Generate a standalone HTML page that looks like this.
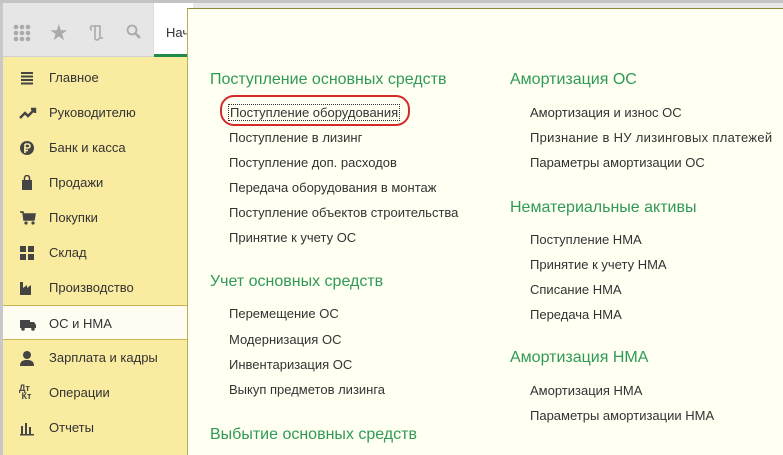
<!DOCTYPE html>
<html><head><meta charset="utf-8"><style>
*{margin:0;padding:0;box-sizing:border-box}
body{width:783px;height:455px;overflow:hidden;background:#e8e8e8;font-family:"Liberation Sans",sans-serif;position:relative}
.topline{position:absolute;left:0;top:0;width:783px;height:3px;background:#c4c4c4}
.lb{position:absolute;left:0;top:3px;width:3px;height:452px;background:#c8c8c8}
.tool{position:absolute;left:3px;top:3px;width:150px;height:54px;background:#e6e6e6;border-bottom:1px solid #cfcfcf}
.tab{position:absolute;left:153px;top:3px;width:40px;height:54px;background:#fff;border-left:1px solid #ddd}
.tab span{position:absolute;left:12px;top:22px;font-size:13px;color:#333}
.tab i{position:absolute;left:0;bottom:0;width:40px;height:3px;background:#1f8a4c}
.side{position:absolute;left:3px;top:57px;width:184px;height:398px;background:#f9eba0}
.it{position:absolute;left:0;width:184px;height:35px;font-size:13px;color:#333}
.it span{position:absolute;left:46px;top:10px}
.it svg{position:absolute;left:16px;top:10px}
.sel{background:#fffdf2;border-top:1px solid #c9b554;border-bottom:1px solid #c9b554}
.panel{position:absolute;left:187px;top:8px;width:596px;height:447px;background:#fffff2;border-top:1px solid #8f8a3a;border-left:1px solid #b9ad55}
.h{position:absolute;font-size:16px;color:#2f9a57}
.a{position:absolute;font-size:13px;color:#333}
</style></head><body>
<div class="topline"></div><div class="lb"></div>
<div class="tool">
<svg style="position:absolute;left:10px;top:21px" width="18" height="18"><g fill="#aaa"><circle cx="3" cy="3" r="2.3"/><circle cx="9" cy="3" r="2.3"/><circle cx="15" cy="3" r="2.3"/><circle cx="3" cy="9" r="2.3"/><circle cx="9" cy="9" r="2.3"/><circle cx="15" cy="9" r="2.3"/><circle cx="3" cy="15" r="2.3"/><circle cx="9" cy="15" r="2.3"/><circle cx="15" cy="15" r="2.3"/></g></svg>
<span style="position:absolute;left:46px;top:17px;font-size:22px;color:#aaa">★</span>
<svg style="position:absolute;left:86px;top:21px" width="16" height="18"><path d="M3 2h8v12h3M3 2c-2 0-2 4 0 4M6 2v12a2 2 0 0 0 4 0" stroke="#aaa" stroke-width="1.6" fill="none"/></svg>
<svg style="position:absolute;left:123px;top:21px" width="16" height="16"><circle cx="6" cy="6" r="4.5" stroke="#aaa" stroke-width="1.8" fill="none"/><path d="M9.5 9.5l4.5 4.5" stroke="#aaa" stroke-width="2.4"/></svg>
</div>
<div class="tab"><span>Нач</span><i></i></div>
<div class="side">
<div class="it" style="top:3px"><svg width="16" height="16"><path d="M2 3h12M2 6.5h12M2 10h12M2 13.5h12" stroke="#444" stroke-width="2"/></svg><span>Главное</span></div>
<div class="it" style="top:38px"><svg width="18" height="16"><path d="M1 13l5-5 3 3 6-6M12 4h4v4" stroke="#444" stroke-width="2.4" fill="none"/></svg><span>Руководителю</span></div>
<div class="it" style="top:73px"><svg width="16" height="16"><circle cx="8" cy="8" r="7" fill="#444"/><path d="M6 4v9M6 4h3a2 2 0 0 1 0 4H5M5 10.5h4" stroke="#f9eba0" stroke-width="1.6" fill="none"/></svg><span>Банк и касса</span></div>
<div class="it" style="top:108px"><svg width="16" height="16"><rect x="3" y="5" width="10" height="10" fill="#444"/><path d="M5.5 6V3a2.5 2.5 0 0 1 5 0v3" stroke="#444" stroke-width="1.5" fill="none"/></svg><span>Продажи</span></div>
<div class="it" style="top:143px"><svg width="18" height="16"><path d="M1 2h3l1 8h10l1-6H5" fill="#444" stroke="#444" stroke-width="1.5"/><circle cx="7" cy="13" r="1.6" fill="#444"/><circle cx="14" cy="13" r="1.6" fill="#444"/></svg><span>Покупки</span></div>
<div class="it" style="top:178px"><svg width="16" height="16"><path d="M1 1h6v6H1zM9 1h6v6H9zM1 9h6v6H1zM9 9h6v6H9z" fill="#444"/></svg><span>Склад</span></div>
<div class="it" style="top:213px"><svg width="16" height="16"><path d="M1 15V2h3v6l4-3v3l4-3v10z" fill="#444"/></svg><span>Производство</span></div>
<div class="it sel" style="top:248px"><svg width="18" height="16"><path d="M1 4h10v8H1zM11 6h4l2 3v3h-6z" fill="#444"/><circle cx="4" cy="13" r="1.8" fill="#444"/><circle cx="14" cy="13" r="1.8" fill="#444"/></svg><span>ОС и НМА</span></div>
<div class="it" style="top:283px"><svg width="16" height="16"><circle cx="8" cy="5" r="4" fill="#444"/><path d="M1 16c0-5 3-6 7-6s7 1 7 6z" fill="#444"/></svg><span>Зарплата и кадры</span></div>
<div class="it" style="top:318px"><span style="left:16px;top:9px;font-size:9px;font-weight:bold;line-height:8px;color:#444">Дт<br>&nbsp;Кт</span><span>Операции</span></div>
<div class="it" style="top:353px"><svg width="16" height="16"><path d="M2 6h2v8H2zM6 3h2v11H6zM10 7h2v7h-2zM1 14h14v1.5H1z" fill="#444"/></svg><span>Отчеты</span></div>
</div>
<div class="panel"></div>
<div class="h" style="left:210px;top:71px">Поступление основных средств</div>
<div class="a" style="border:1px dotted #333;padding:0 1px;left:228px;top:104px">Поступление оборудования</div>
<div style="position:absolute;left:220px;top:95px;width:190px;height:31px;border:2.5px solid #d42a2a;border-radius:14px"></div>
<div class="a" style="left:229px;top:130px">Поступление в лизинг</div>
<div class="a" style="left:229px;top:155px">Поступление доп. расходов</div>
<div class="a" style="left:229px;top:180px">Передача оборудования в монтаж</div>
<div class="a" style="left:229px;top:205px">Поступление объектов строительства</div>
<div class="a" style="left:229px;top:230px">Принятие к учету ОС</div>
<div class="h" style="left:210px;top:273px">Учет основных средств</div>
<div class="a" style="left:229px;top:306px">Перемещение ОС</div>
<div class="a" style="left:229px;top:332px">Модернизация ОС</div>
<div class="a" style="left:229px;top:357px">Инвентаризация ОС</div>
<div class="a" style="left:229px;top:382px">Выкуп предметов лизинга</div>
<div class="h" style="left:210px;top:426px">Выбытие основных средств</div>
<div class="h" style="left:510px;top:71px">Амортизация ОС</div>
<div class="a" style="left:530px;top:105px">Амортизация и износ ОС</div>
<div class="a" style="left:530px;top:130px;letter-spacing:0.3px">Признание в НУ лизинговых платежей</div>
<div class="a" style="left:530px;top:155px">Параметры амортизации ОС</div>
<div class="h" style="left:510px;top:199px">Нематериальные активы</div>
<div class="a" style="left:530px;top:232px">Поступление НМА</div>
<div class="a" style="left:530px;top:257px">Принятие к учету НМА</div>
<div class="a" style="left:530px;top:282px">Списание НМА</div>
<div class="a" style="left:530px;top:307px">Передача НМА</div>
<div class="h" style="left:510px;top:349px">Амортизация НМА</div>
<div class="a" style="left:530px;top:383px">Амортизация НМА</div>
<div class="a" style="left:530px;top:408px">Параметры амортизации НМА</div>
</body></html>
